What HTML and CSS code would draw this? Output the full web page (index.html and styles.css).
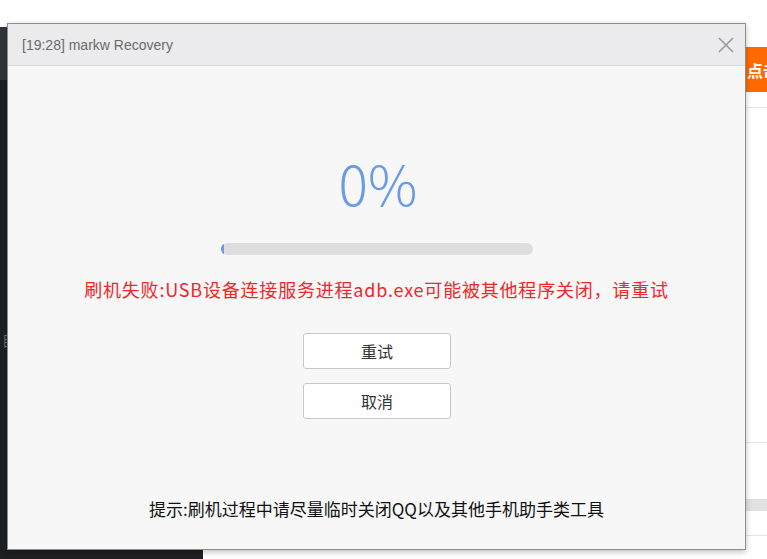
FILE: index.html
```html
<!DOCTYPE html>
<html lang="zh-CN">
<head>
    <meta charset="UTF-8">
    <meta name="viewport" content="width=device-width, initial-scale=1.0">
    <title>markw Recovery</title>
    <link rel="stylesheet" href="styles.css">
</head>
<body>
    <div class="app">
        <div class="topbar"></div>
        <div class="workspace">
            <div class="sidebar">
                <div class="side-head"></div>
                <div class="side-item">目录</div>
            </div>
            <div class="main">
                <div class="toolbar">
                    <button class="flash-btn">点击刷机</button>
                </div>
                <div class="row row-tall"></div>
                <div class="row row-mid"></div>
                <div class="row row-band"></div>
                <div class="row row-end"></div>
            </div>
        </div>
    </div>

    <!-- flash progress dialog -->
    <div class="dialog">
        <div class="dialog-title">
            <span>[19:28] markw Recovery</span>
            <span class="close">
                <svg width="16" height="16" viewBox="0 0 16 16">
                    <path d="M1 1 L15 15 M15 1 L1 15" stroke="#9a9a9a" stroke-width="1.6" fill="none"/>
                </svg>
            </span>
        </div>
        <div class="dialog-body">
            <div class="percent">0%</div>
            <div class="progress"><div class="progress-fill" style="width: 1%;"></div></div>
            <div class="error">刷机失败:USB设备连接服务进程adb.exe可能被其他程序关闭，请重试</div>
            <div class="actions">
                <button class="btn">重试</button>
                <button class="btn">取消</button>
            </div>
            <div class="hint">提示:刷机过程中请尽量临时关闭QQ以及其他手机助手类工具</div>
        </div>
    </div>
</body>
</html>
```

FILE: styles.css
```css
body {
    margin: 0;
    width: 767px;
    height: 559px;
    overflow: hidden;
    font-family: "Noto Sans CJK SC", "Noto Sans", sans-serif;
    background: #fff;
}
.app {
    display: flex;
    flex-direction: column;
    height: 559px;
}
.topbar {
    height: 27px;
    background: #fff;
}
.workspace {
    flex: 1;
    display: flex;
}
.sidebar {
    flex: none;
    width: 203px;
    background: #1e1f23;
    display: flex;
    flex-direction: column;
}
.side-head {
    height: 53px;
    background: #34353a;
}
.side-item {
    margin-top: 250px;
    padding-left: 2px;
    color: #6d6e73;
    font-size: 14px;
}
.main {
    flex: 1;
    min-width: 0;
    overflow: hidden;
    display: flex;
    flex-direction: column;
}
.toolbar {
    height: 81px;
    display: flex;
    align-items: flex-start;
    padding-top: 20px;
    padding-left: 542px;
    box-sizing: border-box;
    border-bottom: 1px solid #e6e6e6;
}
.flash-btn {
    flex: none;
    width: 90px;
    height: 45px;
    border: none;
    background: #ff6a00;
    color: #fff;
    font-family: inherit;
    font-size: 16px;
    font-weight: bold;
    text-align: left;
    padding: 0 0 0 2px;
}
.row {
    border-bottom: 1px solid #e6e6e6;
}
.row-tall {
    height: 334px;
}
.row-mid {
    height: 56px;
    border-bottom: none;
}
.row-band {
    height: 12px;
    background: #e2e2e2;
    border-bottom: none;
}
.row-end {
    height: 24px;
}

.dialog {
    position: absolute;
    left: 7px;
    top: 23px;
    width: 737px;
    height: 525px;
    background: #f7f7f7;
    border: 1px solid #8d8d8d;
    box-shadow: 0 2px 6px rgba(0, 0, 0, 0.25);
    display: flex;
    flex-direction: column;
}
.dialog-title {
    height: 41px;
    background: #ebebed;
    border-bottom: 1px solid #d8d8da;
    display: flex;
    align-items: center;
    justify-content: space-between;
    padding: 0 11px 0 14px;
    font-family: "Liberation Sans", Arial, sans-serif;
    font-size: 14px;
    color: #6a6a6a;
}
.close {
    display: flex;
}
.dialog-body {
    flex: 1;
    display: flex;
    flex-direction: column;
    align-items: center;
}
.percent {
    margin-top: 86px;
    font-size: 55px;
    font-weight: 300;
    line-height: 60px;
    color: #6a9be6;
    margin-left: 3px;
}
.progress {
    margin-top: 31px;
    width: 312px;
    height: 12px;
    border-radius: 6px;
    background: #dedede;
    overflow: hidden;
}
.progress-fill {
    height: 100%;
    background: #6a9be6;
}
.error {
    margin-top: 21px;
    font-size: 18px;
    line-height: 26px;
    letter-spacing: 0.8px;
    color: #f0262a;
}
.actions {
    margin-top: 31px;
    display: flex;
    flex-direction: column;
    gap: 14px;
}
.btn {
    width: 148px;
    height: 36px;
    background: #fff;
    border: 1px solid #c8c8c8;
    border-radius: 3px;
    font-family: inherit;
    font-size: 16px;
    color: #333;
    margin-left: 1px;
}
.hint {
    margin-top: auto;
    margin-bottom: 28px;
    font-size: 17px;
    color: #111;
}
```
